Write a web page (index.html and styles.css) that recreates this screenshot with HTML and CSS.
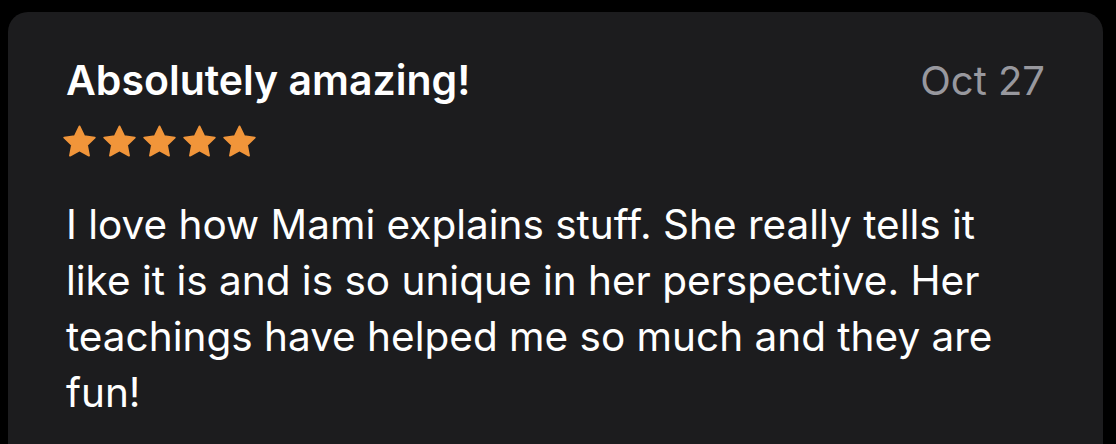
FILE: index.html
```html
<!DOCTYPE html>
<html lang="en">
<head>
  <meta charset="UTF-8" />
  <meta name="viewport" content="width=device-width, initial-scale=1.0"/>
  <title>Review</title>
  <link rel="stylesheet" href="styles.css">
</head>
<body>
  <div class="review-card">
    <div class="review-head">
      <div class="review-title">Absolutely amazing!</div>
      <div class="review-date">Oct 27</div>
    </div>

    <div class="stars">
      <svg class="star" viewBox="1.4 1 21.2 20"><path d="M12 1.6l3 6.3 6.8.9-5 4.8 1.3 6.8L12 17.1l-6.1 3.3 1.3-6.8-5-4.8 6.8-.9z"/></svg>
      <svg class="star" viewBox="1.4 1 21.2 20"><path d="M12 1.6l3 6.3 6.8.9-5 4.8 1.3 6.8L12 17.1l-6.1 3.3 1.3-6.8-5-4.8 6.8-.9z"/></svg>
      <svg class="star" viewBox="1.4 1 21.2 20"><path d="M12 1.6l3 6.3 6.8.9-5 4.8 1.3 6.8L12 17.1l-6.1 3.3 1.3-6.8-5-4.8 6.8-.9z"/></svg>
      <svg class="star" viewBox="1.4 1 21.2 20"><path d="M12 1.6l3 6.3 6.8.9-5 4.8 1.3 6.8L12 17.1l-6.1 3.3 1.3-6.8-5-4.8 6.8-.9z"/></svg>
      <svg class="star" viewBox="1.4 1 21.2 20"><path d="M12 1.6l3 6.3 6.8.9-5 4.8 1.3 6.8L12 17.1l-6.1 3.3 1.3-6.8-5-4.8 6.8-.9z"/></svg>
    </div>

    <p class="review-body">I love how Mami explains stuff. She really tells it like it is and is so unique in her perspective. Her teachings have helped me so much and they are fun!</p>
  </div>
</body>
</html>
```

FILE: styles.css
```css
body {
  margin: 0;
  background-color: #000;
  font-family: Inter, "Noto Sans", sans-serif;
  height: 100vh;
  overflow: hidden;
}

/* card runs off the bottom of the screen, so only the top corners are round */
.review-card {
  margin: 12px 13px 0 8px;
  padding: 44px 58px 0 58px;
  background-color: #1c1c1e;
  border-radius: 20px 20px 0 0;
  height: calc(100vh - 12px);
  box-sizing: border-box;
}

.review-head {
  display: flex;
  justify-content: space-between;
  align-items: baseline;
}

.review-title {
  color: #fff;
  font-size: 41px;
  font-weight: 600;
  line-height: 48px;
}

.review-date {
  color: #98989e;
  font-size: 40px;
  line-height: 48px;
}

.stars {
  display: flex;
  gap: 7px;
  margin-top: 20px;
  margin-left: -3px;
  height: 32px;
}

.star {
  width: 33px;
  height: 32px;
  fill: #f1953a;
  stroke: #f1953a;
  stroke-width: 1.2;
  stroke-linejoin: round;
}

.review-body {
  margin: 40px 0 0 0;
  color: #fff;
  font-size: 40.5px;
  line-height: 56px;
}
```
